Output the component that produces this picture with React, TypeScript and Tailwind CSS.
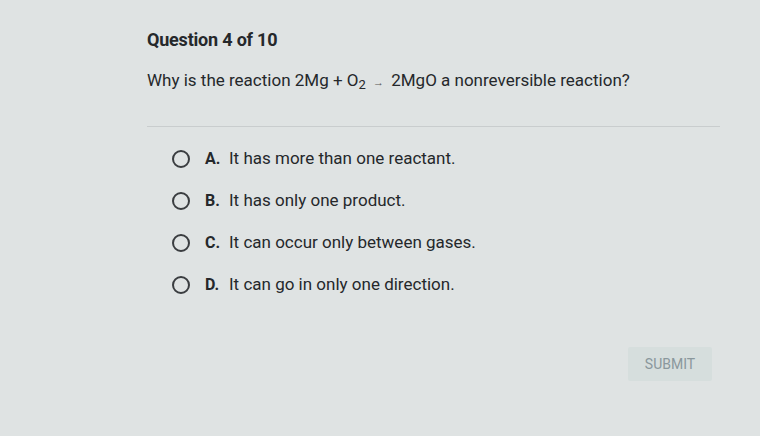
const options = [
  { letter: "A.", text: "It has more than one reactant." },
  { letter: "B.", text: "It has only one product." },
  { letter: "C.", text: "It can occur only between gases." },
  { letter: "D.", text: "It can go in only one direction." },
];

export default function App() {
  return (
    <div
      className="w-[760px] h-[436px] overflow-hidden bg-[#dfe3e3] text-[#25282b]"
      style={{ fontFamily: "Roboto, 'Liberation Sans', sans-serif" }}
    >
      <div className="pl-[147px] pr-[40px] pt-[28px]">
        <h1 className="text-[18px] font-bold leading-[24px] tracking-[-0.2px]">Question 4 of 10</h1>
        <p className="mt-[17px] text-[17px] leading-[22px]">
          Why is the reaction 2Mg + O<sub className="text-[13px]">2</sub>{" "}
          <span className="mx-[3px] text-[11px] text-[#555]">→</span> 2MgO a nonreversible reaction?
        </p>
        <div className="mt-[32px] h-px bg-[#c9cdce]" />

        <div className="mt-[21px] flex flex-col gap-[20px] pl-[25px]">
          {options.map((o) => (
            <label key={o.letter} className="flex items-center h-[22px]">
              <span className="w-[18px] h-[18px] rounded-full border-2 border-[#3a3d40]" />
              <span className="ml-[15px] w-[24px] font-bold text-[16px]">{o.letter}</span>
              <span className="text-[17px]">{o.text}</span>
            </label>
          ))}
        </div>

        <div className="flex justify-end pr-[8px] mt-[51px]">
          <button className="w-[84px] h-[34px] bg-[#d6dedd] text-[#8a979c] text-[14px] rounded-[2px]">
            SUBMIT
          </button>
        </div>
      </div>
    </div>
  );
}
